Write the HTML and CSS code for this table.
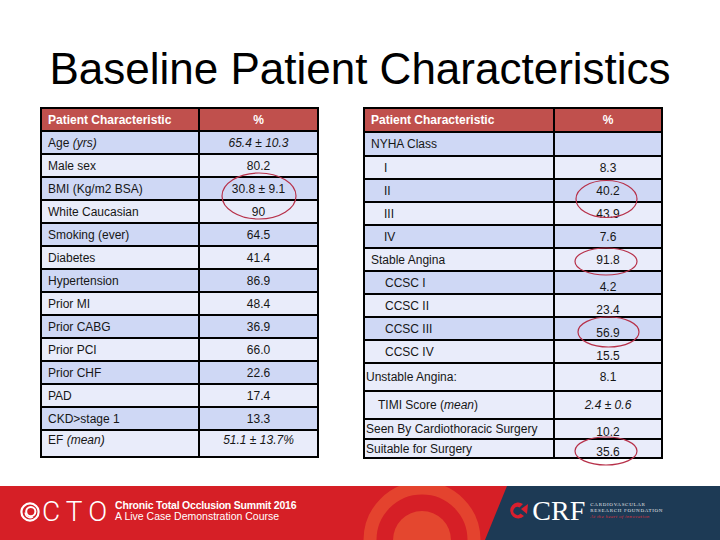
FILE: index.html
```html
<!DOCTYPE html>
<html>
<head>
<meta charset="utf-8">
<title>Baseline Patient Characteristics</title>
<link rel="stylesheet" href="styles.css">
</head>
<body>
<div class="slide">
  <h1 class="title">Baseline Patient Characteristics</h1>
  <div class="tables">
    <div class="tbl tbl-left">
      <div class="c h">Patient Characteristic</div><div class="c h v">%</div>
      <div class="c dk"><span>Age <i>(yrs)</i></span></div><div class="c dk v"><i>65.4 ± 10.3</i></div>
      <div class="c lt">Male sex</div><div class="c lt v">80.2</div>
      <div class="c dk">BMI (Kg/m2 BSA)</div><div class="c dk v">30.8 ± 9.1</div>
      <div class="c lt">White Caucasian</div><div class="c lt v">90</div>
      <div class="c dk">Smoking (ever)</div><div class="c dk v">64.5</div>
      <div class="c lt">Diabetes</div><div class="c lt v">41.4</div>
      <div class="c dk">Hypertension</div><div class="c dk v">86.9</div>
      <div class="c lt">Prior MI</div><div class="c lt v">48.4</div>
      <div class="c dk">Prior CABG</div><div class="c dk v">36.9</div>
      <div class="c lt">Prior PCI</div><div class="c lt v">66.0</div>
      <div class="c dk">Prior CHF</div><div class="c dk v">22.6</div>
      <div class="c lt">PAD</div><div class="c lt v">17.4</div>
      <div class="c dk">CKD&gt;stage 1</div><div class="c dk v">13.3</div>
      <div class="c lt top"><span>EF <i>(mean)</i></span></div><div class="c lt v top"><i>51.1 ± 13.7%</i></div>
    </div>
    <div class="tbl tbl-right">
      <div class="c h">Patient Characteristic</div><div class="c h v">%</div>
      <div class="c dk p8">NYHA Class</div><div class="c dk v"></div>
      <div class="c lt p21">I</div><div class="c lt v">8.3</div>
      <div class="c dk p21">II</div><div class="c dk v">40.2</div>
      <div class="c lt p21">III</div><div class="c lt v">43.9</div>
      <div class="c dk p21">IV</div><div class="c dk v">7.6</div>
      <div class="c lt p8">Stable Angina</div><div class="c lt v">91.8</div>
      <div class="c dk p22">CCSC I</div><div class="c dk v lo">4.2</div>
      <div class="c lt p22">CCSC II</div><div class="c lt v lo">23.4</div>
      <div class="c dk p22">CCSC III</div><div class="c dk v lo">56.9</div>
      <div class="c lt p22">CCSC IV</div><div class="c lt v lo">15.5</div>
      <div class="c lt p1">Unstable Angina:</div><div class="c lt v">8.1</div>
      <div class="c lt p14"><span>TIMI Score (<i>mean</i>)</span></div><div class="c lt v"><i>2.4 ± 0.6</i></div>
      <div class="c lt p1">Seen By Cardiothoracic Surgery</div><div class="c lt v lo2">10.2</div>
      <div class="c lt p1">Suitable for Surgery</div><div class="c lt v lo2">35.6</div>
    </div>
  </div>
  <footer class="footer">
    <svg class="footer-bg" width="720" height="54" viewBox="0 0 720 54">
      <rect x="0" y="0" width="720" height="54" fill="#d61f26"/>
      <circle cx="422" cy="54" r="52" fill="none" stroke="#e4432e" stroke-width="13"/>
      <circle cx="422" cy="54" r="29" fill="#e4472f"/>
      <polygon points="507,0 720,0 720,54 485,54" fill="#1d3a55"/>
    </svg>
    <div class="cto">
      <svg class="cto-icon" width="20" height="20" viewBox="0 0 20 20">
        <circle cx="10" cy="10" r="8.6" fill="none" stroke="#fff" stroke-width="2.2"/>
        <circle cx="10.8" cy="9.6" r="4.6" fill="none" stroke="#fff" stroke-width="2"/>
        <path d="M5.2 10.5 A5.2 5.2 0 0 0 13 15" fill="none" stroke="#fff" stroke-width="1.4"/>
      </svg>
      <span class="cto-word">CTO</span>
      <div class="cto-text">
        <span class="cto-line1">Chronic Total Occlusion Summit 2016</span>
        <span class="cto-line2">A Live Case Demonstration Course</span>
      </div>
    </div>
    <div class="crf">
      <svg class="crf-icon" width="22" height="20" viewBox="0 0 22 20">
        <path d="M15 3 A8 8 0 1 0 16 15 L12.5 12.5 A4 4 0 1 1 11.5 6.5 Z" fill="#d91f2e"/>
        <path d="M13 8 L20 3 L19 13 Z" fill="#d91f2e"/>
      </svg>
      <span class="crf-word">CRF</span>
      <div class="crf-text">
        <span>CARDIOVASCULAR</span>
        <span>RESEARCH FOUNDATION</span>
        <span class="crf-tag">At the heart of innovation</span>
      </div>
    </div>
  </footer>
  <svg class="marks" width="720" height="540" viewBox="0 0 720 540">
    <g fill="none" stroke="#b73049" stroke-width="1.2">
      <ellipse cx="259" cy="196" rx="37" ry="23"/>
      <ellipse cx="606.5" cy="199" rx="30.5" ry="18.5"/>
      <ellipse cx="606" cy="261.5" rx="31" ry="13.5"/>
      <ellipse cx="608.5" cy="332" rx="30.5" ry="15"/>
      <ellipse cx="606" cy="451" rx="31" ry="14"/>
    </g>
  </svg>
</div>
</body>
</html>
```

FILE: styles.css
```css
html, body {
  margin: 0;
  padding: 0;
  background: #fff;
}

.slide {
  position: relative;
  width: 720px;
  height: 540px;
  display: flex;
  flex-direction: column;
  overflow: hidden;
  font-family: "Liberation Sans", Arial, sans-serif;
}

.title {
  margin: 0;
  padding-top: 47px;
  height: 44px;
  line-height: 44px;
  font-size: 44px;
  font-weight: normal;
  text-align: center;
  color: #000;
  margin-bottom: 16px;
}

.tables {
  display: flex;
  align-items: flex-start;
  gap: 44px;
  padding-left: 40px;
}

.tbl {
  display: grid;
  gap: 2px;
  padding: 2px;
  background: #000;
}

.tbl-left {
  grid-template-columns: 156px 117px;
  grid-template-rows: 21px repeat(13, 21px) 25px;
}

.tbl-right {
  grid-template-columns: 188px 106px;
  grid-template-rows: 22px 22px repeat(9, 21px) 26px 26px 18px 17px;
}

.c {
  display: flex;
  align-items: center;
  padding-left: 6px;
  font-size: 12px;
  line-height: 14px;
  color: #161616;
  white-space: nowrap;
}

.c i {
  font-style: italic;
}

.h {
  background: #c0504d;
  color: #fff;
  font-weight: bold;
}

.dk {
  background: #cfd8f5;
}

.lt {
  background: #e9ecfa;
}

.v {
  justify-content: center;
  padding-left: 0;
}

.top {
  align-items: flex-start;
  padding-top: 2px;
}

.lo {
  align-items: flex-start;
  padding-top: 8px;
}

.lo2 {
  align-items: flex-start;
  padding-top: 5px;
}

.p1 { padding-left: 1px; }
.p8 { padding-left: 6px; }
.p14 { padding-left: 13px; }
.p21 { padding-left: 19px; }
.p22 { padding-left: 20px; }

.footer {
  position: relative;
  margin-top: auto;
  height: 54px;
  display: flex;
  align-items: center;
}

.footer-bg {
  position: absolute;
  left: 0;
  top: 0;
}

.cto {
  position: relative;
  display: flex;
  align-items: center;
  padding-left: 20px;
  color: #fff;
}

.cto-icon {
  display: block;
  margin-top: -2px;
}

.cto-word {
  font-family: Roboto, "Liberation Sans", sans-serif;
  font-weight: 300;
  font-size: 28px;
  line-height: 28px;
  letter-spacing: 6px;
  margin-left: 2px;
  margin-top: -2px;
}

.cto-text {
  display: flex;
  flex-direction: column;
  margin-left: 2px;
  margin-top: -4px;
  font-size: 10.5px;
  line-height: 11px;
}

.cto-line1 {
  font-weight: bold;
  letter-spacing: -0.2px;
}

.cto-line2 {
  font-size: 10.5px;
}

.crf {
  position: relative;
  display: flex;
  align-items: center;
  margin-left: 212px;
  margin-top: -4px;
}

.crf-icon {
  display: block;
}

.crf-word {
  font-family: "Liberation Serif", serif;
  font-size: 28px;
  line-height: 26px;
  color: #fff;
  margin-left: 2px;
}

.crf-text {
  display: flex;
  flex-direction: column;
  margin-left: 5px;
  font-family: "Liberation Serif", serif;
  font-size: 5px;
  line-height: 6px;
  letter-spacing: 0.7px;
  color: #e6e6ea;
}

.crf-tag {
  color: #d4303e;
  font-style: italic;
  letter-spacing: 0.3px;
}

.marks {
  position: absolute;
  left: 0;
  top: 0;
  pointer-events: none;
}
```
